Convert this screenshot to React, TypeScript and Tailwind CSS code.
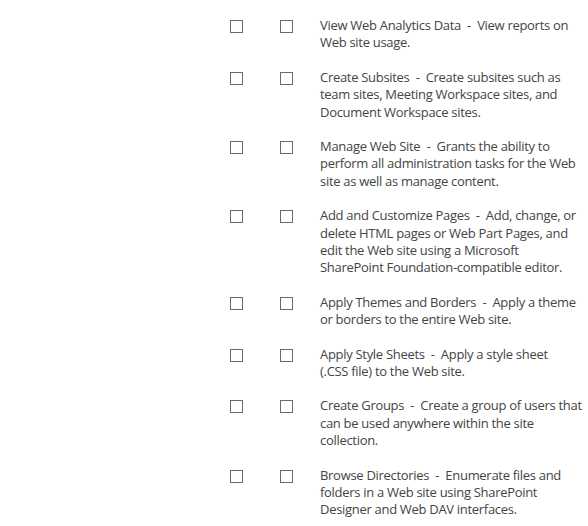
import React from 'react';

interface Permission {
  lines: string[];
}

const permissions: Permission[] = [
  { lines: ['View Web Analytics Data  -  View reports on', 'Web site usage.'] },
  {
    lines: [
      'Create Subsites  -  Create subsites such as',
      'team sites, Meeting Workspace sites, and',
      'Document Workspace sites.',
    ],
  },
  {
    lines: [
      'Manage Web Site  -  Grants the ability to',
      'perform all administration tasks for the Web',
      'site as well as manage content.',
    ],
  },
  {
    lines: [
      'Add and Customize Pages  -  Add, change, or',
      'delete HTML pages or Web Part Pages, and',
      'edit the Web site using a Microsoft',
      'SharePoint Foundation-compatible editor.',
    ],
  },
  { lines: ['Apply Themes and Borders  -  Apply a theme', 'or borders to the entire Web site.'] },
  { lines: ['Apply Style Sheets  -  Apply a style sheet', '(.CSS file) to the Web site.'] },
  {
    lines: [
      'Create Groups  -  Create a group of users that',
      'can be used anywhere within the site',
      'collection.',
    ],
  },
  {
    lines: [
      'Browse Directories  -  Enumerate files and',
      'folders in a Web site using SharePoint',
      'Designer and Web DAV interfaces.',
    ],
  },
];

const Box: React.FC = () => (
  <span className="block w-[13px] h-[13px] border border-[#6a6a6a] bg-white mt-[3px]" />
);

export default function App() {
  return (
    <div
      className="w-[588px] h-[526px] bg-white overflow-hidden pt-[17px] text-[13px] leading-[17.33px] text-[#444444]"
      style={{ fontFamily: '"Open Sans", "Noto Sans", sans-serif' }}
    >
      <div className="flex flex-col gap-[17.2px]">
        {permissions.map((p, i) => (
          <div key={i} className="flex items-start pl-[230px]">
            <div className="w-[50px]">
              <Box />
            </div>
            <div className="w-[40px]">
              <Box />
            </div>
            <div className="whitespace-pre tracking-[-0.3px]">
              {p.lines.map((l, j) => (
                <div key={j}>{l}</div>
              ))}
            </div>
          </div>
        ))}
      </div>
    </div>
  );
}
